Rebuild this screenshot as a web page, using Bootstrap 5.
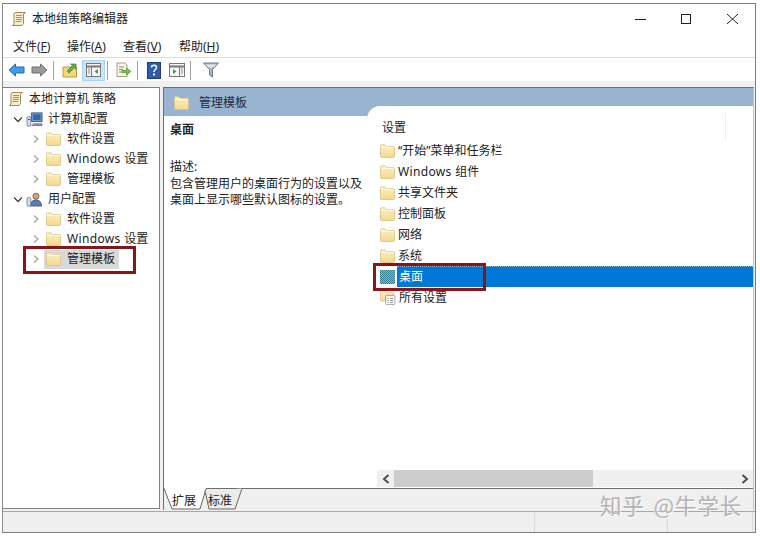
<!DOCTYPE html>
<html lang="zh-CN">
<head>
<meta charset="utf-8">
<title>本地组策略编辑器</title>
<link href="https://cdn.jsdelivr.net/npm/bootstrap@5.3.0/dist/css/bootstrap.min.css" rel="stylesheet">
<style>
html,body{height:537px;overflow:hidden;background:#fff}
body{font-family:"Noto Sans","Noto Sans CJK SC",sans-serif;font-size:12px;line-height:16px;color:#222;position:relative}
.wnd{position:relative;margin:3px 0 0 2px;width:754px;height:530px;border:1px solid #7d7d7d;border-left-color:#8a8a8a;background:#f0f0f0}
.titlebar{height:30px;background:#fff;padding:0 0 0 8px}
.titlebar .wt{margin-left:5px}
.capbtns{width:138px}
.menubar{height:23px;background:#fff;padding:2px 0 0 10px}
.menubar u{text-underline-offset:1px}
.m1{width:54px}.m2{width:56px}
.toolbar{height:24px;background:#fff;border-top:1px solid #dcdcdc;padding:1px 0 0 2px}
.tbtn{width:23px;height:21px;border:1px solid transparent}
.tbtn.on{background:#cce4f7;border-color:#a9d3f2;margin-left:1px}
.tsep{width:1px;height:19px;background:#a0a0a0;margin:0 4px 0 2px}
.mainrow{margin-top:6px;height:423px}
.treepane{width:157px;background:#fff;border:1px solid #828282;border-left:0;margin-right:3px;height:422px;padding-top:1px}
.trow{height:20px;white-space:nowrap}
.lv0{padding-left:5px}.lv1{padding-left:10px}.lv2{padding-left:28px}
.tchev{width:10px;flex:none}
.tico{margin-left:5px;margin-right:6px;flex:none}
.lv0 .tico{margin:0 5px 0 0}
.lv1 .tico{margin:0 5px 0 3px}
.tsel{background:#d9d9d9;margin-left:3px;padding:2px 4px 2px 0;height:19px}
.tsel .tico{margin-left:2px}
.wlat{letter-spacing:.35px}
.rpane{width:591px;border-top:1px solid #6e6e6e;border-left:1px solid #6e6e6e;border-right:1px solid #c4c4c4;margin-right:1px}
.panebody{background:#99b4d1;flex:1;min-height:0}
.desc{width:203px;flex:none}
.deschead{height:28px;padding:2px 0 0 10px;color:#1e2a38}
.deschead svg{margin-right:10px}
.descbody{background:#fff;padding:6px 0 0 6px;flex:1}
.descgap{height:21px}
.desclines{line-height:16.5px}
.listcol{flex:1;margin-top:18px;background:#fff;border-top-left-radius:13px}
.lhead{height:27px;margin-top:7px;width:359px;padding:2px 0 0 15px;border-right:1px solid #eee}
.lrow{height:21px;white-space:nowrap;padding-left:13px}
.lrow svg{flex:none;margin-right:3px}
.lsel-text{flex:1;background:#0078d7;color:#fff;border-top:1px dotted #7fb4e0;align-self:stretch;padding-left:2px;margin-left:-1px}
.hsb{height:17px;margin-left:10px;background:#f0f0f0;margin-top:auto;margin-bottom:1px}
.sbtn{width:17px;flex:none}
.thumb{width:199px;background:#cdcdcd}
.tabstrip{position:relative;height:22px;background:#f0f0f0;border-top:1px solid #6e6e6e;flex:none}
.tabart{position:absolute;left:-1px;top:-1px}
.tablab{position:relative;padding-top:4px}
.tablab.a{margin-left:8px}
.tablab.b{margin-left:12px}
.statusbar{height:21px;margin-top:1px;border-top:1px solid #a8a8a8}
.scell{border-right:1px solid #dadada}
.s1{width:532px}.s2{width:133px}.s3{width:85px}
.redbox{position:absolute;border:3px solid #8a1518;pointer-events:none}
.rb1{left:23px;top:246px;width:113px;height:28px}
.rb2{left:373px;top:263px;width:113px;height:28px}
.zhwm{position:absolute;left:600px;top:490px;font-size:21.5px;line-height:30px;color:#adadad;text-shadow:1px 1px 0 #fff,-1px 0 0 #e8e8e8;white-space:nowrap;letter-spacing:.9px;opacity:.9;font-family:"Noto Sans CJK SC",sans-serif}
.zhwm i{font-style:normal;margin-left:9px}
</style>
</head>
<body>
<svg width="0" height="0" class="position-absolute">
<defs>
<linearGradient id="fg" x1="0" y1="0" x2="0" y2="1"><stop offset="0" stop-color="#fbf0c8"/><stop offset="1" stop-color="#f5d88c"/></linearGradient>
<pattern id="dith" width="2" height="2" patternUnits="userSpaceOnUse"><rect width="2" height="2" fill="#8dbcbc"/><rect width="1" height="1" fill="#2f7f93"/><rect x="1" y="1" width="1" height="1" fill="#2f7f93"/></pattern>
<symbol id="folder" viewBox="0 0 15 14"><path d="M.5 2.500V1.800C.5 1.200 1 .8 1.500.8H5l1.500 1.700H13.500c.6 0 1 .4 1 1v9.200c0 .4-.4.8-.8.8H1.300c-.4 0-.8-.4-.8-.8z" fill="url(#fg)" stroke="#d8c285" stroke-width=".8"/><path d="M1 3.300H14" stroke="#fffbe6" stroke-width="1"/></symbol>
<symbol id="policy" viewBox="0 0 16 16"><path d="M4 1.500H14.500L12.500 3V12.500L11 14.500H1.500L3 13V3z" fill="#f6eecb" stroke="#9f8a56" stroke-width="1"/><path d="M5 4.500H11M5 6.500H11M5 8.500H11M4.500 10.500H10" stroke="#8f8a70" stroke-width=".9"/></symbol>
<symbol id="comp" viewBox="0 0 18 16"><rect x="6" y="1" width="11" height="9" fill="#7ea7d8" stroke="#2a4a78"/><rect x="7.500" y="2.500" width="8" height="6" fill="#2f66ae"/><path d="M8 12.500H17V14.500H6z" fill="#8f9eb3" stroke="#4d5f79" stroke-width=".7"/><rect x="1" y="5" width="4" height="10" rx="1" fill="#d7e0ea" stroke="#5a6e8c" stroke-width=".8"/><path d="M2 8H4" stroke="#2a4a78"/></symbol>
<symbol id="userico" viewBox="0 0 18 16"><circle cx="10.500" cy="4.500" r="3.200" fill="#d9a67f" stroke="#5f4630" stroke-width=".8"/><path d="M4.500 15c0-4.500 2.500-6.500 6-6.500s6 2 6 6.500z" fill="#5b7fae" stroke="#344c6e" stroke-width=".8"/><rect x="1" y="6" width="4" height="9" rx="1" fill="#d7e0ea" stroke="#5a6e8c" stroke-width=".8"/></symbol>
<symbol id="chevr" viewBox="0 0 10 10"><path d="M3 1.500L7 5 3 8.500" fill="none" stroke="#a6a6a6" stroke-width="1.300"/></symbol>
<symbol id="chevd" viewBox="0 0 10 10"><path d="M1 3.500L5 7.500 9 3.500" fill="none" stroke="#404040" stroke-width="1.300"/></symbol>
<symbol id="allset" viewBox="0 0 16 15"><path d="M.5 9V2c0-.5.4-1 1-1H5l1 1.300h7c.6 0 1 .4 1 1V5H6v6H1.500c-.6 0-1-.4-1-1z" fill="url(#fg)" stroke="#d8c285" stroke-width=".7"/><rect x="5.500" y="5.500" width="9.500" height="9" rx="1" fill="#f7f7f7" stroke="#9a9a9a" stroke-width=".8"/><path d="M7.500 8.500h1M10 8.500h3M7.500 10.500h1M10 10.500h3M7.500 12.500h1M10 12.500h3" stroke="#808080" stroke-width=".8"/></symbol>
</defs>
</svg>

<div class="wnd d-flex flex-column">
  <div class="titlebar d-flex align-items-center">
    <svg width="16" height="16"><use href="#policy"/></svg>
    <span class="wt flex-grow-1">本地组策略编辑器</span>
    <div class="capbtns d-flex align-items-center">
      <svg width="46" height="14" viewBox="0 0 46 14"><path d="M18 7.500H29" stroke="#222"/></svg>
      <svg width="46" height="14" viewBox="0 0 46 14"><rect x="18.500" y="2.500" width="9" height="9" fill="none" stroke="#222"/></svg>
      <svg width="46" height="14" viewBox="0 0 46 14"><path d="M18 2L29 12M29 2L18 12" stroke="#222"/></svg>
    </div>
  </div>
  <div class="menubar d-flex align-items-center">
    <span class="m1">文件(<u>F</u>)</span><span class="m2">操作(<u>A</u>)</span><span class="m2">查看(<u>V</u>)</span><span>帮助(<u>H</u>)</span>
  </div>
  <div class="toolbar d-flex align-items-center">
    <span class="tbtn d-flex align-items-center justify-content-center"><svg width="17" height="14" viewBox="0 0 17 14"><path d="M1 7L7.500 1V4H16V10H7.500V13z" fill="#3f9ee6" stroke="#1f6fb8"/></svg></span>
    <span class="tbtn d-flex align-items-center justify-content-center"><svg width="17" height="14" viewBox="0 0 17 14"><path d="M16 7L9.500 1V4H1V10H9.500V13z" fill="#9a9a9a" stroke="#6f6f6f"/></svg></span>
    <span class="tsep"></span>
    <span class="tbtn d-flex align-items-center justify-content-center"><svg width="16" height="16" viewBox="0 0 16 16"><path d="M1 5H14.500V15H1z" fill="#f3d67d" stroke="#b99b45"/><path d="M5 9L10.500 3.500 8.500 2H14V7.500L12.500 5.500 7 11z" fill="#5fb04a" stroke="#3b8330" stroke-width=".7"/></svg></span>
    <span class="tbtn on d-flex align-items-center justify-content-center"><svg width="15" height="14" viewBox="0 0 15 14"><rect x=".5" y=".5" width="14" height="13" fill="#f6f6f6" stroke="#777"/><path d="M.5 3.500H14.500" stroke="#777" stroke-width="2"/><path d="M5.500 4V13" stroke="#777"/><path d="M2 6H4M2 8H4M2 10H4" stroke="#888"/><path d="M12 6V11L8.500 8.500z" fill="#3d9a46"/></svg></span>
    <span class="tsep"></span>
    <span class="tbtn d-flex align-items-center justify-content-center"><svg width="17" height="16" viewBox="0 0 17 16"><path d="M2 1H10L12 3V14.500H2z" fill="#fbf7e4" stroke="#a89f7a"/><path d="M4 5H9M4 7.500H8M4 10H8" stroke="#888"/><path d="M7 8.500H11.500V6L16 9.500 11.500 13V10.500H7z" fill="#79c24e" stroke="#4b9130" stroke-width=".7"/></svg></span>
    <span class="tsep"></span>
    <span class="tbtn d-flex align-items-center justify-content-center"><svg width="14" height="17" viewBox="0 0 14 17"><rect x=".5" y=".5" width="13" height="16" fill="#2c5bb0" stroke="#1c3c7c"/><path d="M4.500 5.500C4.500 2.500 9.500 2.500 9.500 5.500 9.500 7.500 7 7.500 7 10" fill="none" stroke="#fff" stroke-width="1.500"/><rect x="6" y="11.500" width="2" height="2" fill="#fff"/></svg></span>
    <span class="tbtn d-flex align-items-center justify-content-center"><svg width="16" height="14" viewBox="0 0 16 14"><rect x=".5" y=".5" width="15" height="13" fill="#f6f6f6" stroke="#777"/><path d="M.5 3.500H15.500" stroke="#777" stroke-width="2"/><path d="M10.500 4V13" stroke="#777"/><path d="M12 6H14M12 8H14M12 10H14" stroke="#888"/><path d="M4 6V11L7.500 8.500z" fill="#3d9a46"/></svg></span>
    <span class="tsep"></span>
    <span class="tbtn d-flex align-items-center justify-content-center ms-1"><svg width="16" height="16" viewBox="0 0 16 16"><path d="M.5 1H15.500L9.500 7.500V15L6.500 13V7.500z" fill="#a9b6bf" stroke="#6f7f8a"/><path d="M2.500 2.500H13.500L10 5.500H5.500z" fill="#dfe6ea"/></svg></span>
  </div>
  <div class="mainrow d-flex">
    <div class="treepane">
      <div class="trow d-flex align-items-center lv0"><svg class="tico" width="16" height="16"><use href="#policy"/></svg>本地计算机 策略</div>
      <div class="trow d-flex align-items-center lv1"><svg class="tchev" height="10"><use href="#chevd"/></svg><svg class="tico" width="17" height="15"><use href="#comp"/></svg>计算机配置</div>
      <div class="trow d-flex align-items-center lv2"><svg class="tchev" height="10"><use href="#chevr"/></svg><svg class="tico" width="15" height="14"><use href="#folder"/></svg>软件设置</div>
      <div class="trow d-flex align-items-center lv2"><svg class="tchev" height="10"><use href="#chevr"/></svg><svg class="tico" width="15" height="14"><use href="#folder"/></svg><span><span class="wlat">Windows </span>设置</span></div>
      <div class="trow d-flex align-items-center lv2"><svg class="tchev" height="10"><use href="#chevr"/></svg><svg class="tico" width="15" height="14"><use href="#folder"/></svg>管理模板</div>
      <div class="trow d-flex align-items-center lv1"><svg class="tchev" height="10"><use href="#chevd"/></svg><svg class="tico" width="17" height="15"><use href="#userico"/></svg>用户配置</div>
      <div class="trow d-flex align-items-center lv2"><svg class="tchev" height="10"><use href="#chevr"/></svg><svg class="tico" width="15" height="14"><use href="#folder"/></svg>软件设置</div>
      <div class="trow d-flex align-items-center lv2"><svg class="tchev" height="10"><use href="#chevr"/></svg><svg class="tico" width="15" height="14"><use href="#folder"/></svg><span><span class="wlat">Windows </span>设置</span></div>
      <div class="trow d-flex align-items-center lv2"><svg class="tchev" height="10"><use href="#chevr"/></svg><span class="tsel d-flex align-items-center"><svg class="tico" width="15" height="14"><use href="#folder"/></svg>管理模板</span></div>
    </div>
    <div class="rpane d-flex flex-column">
      <div class="panebody d-flex">
        <div class="desc d-flex flex-column">
          <div class="deschead d-flex align-items-center"><svg width="15" height="14"><use href="#folder"/></svg><span>管理模板</span></div>
          <div class="descbody">
            <div class="fw-bold">桌面</div>
            <div class="descgap"></div>
            <div class="desclines">描述:<br>包含管理用户的桌面行为的设置以及<br>桌面上显示哪些默认图标的设置。</div>
          </div>
        </div>
        <div class="listcol d-flex flex-column">
          <div class="lhead d-flex align-items-center">设置</div>
          <div class="lrow d-flex align-items-center"><svg width="15" height="14"><use href="#folder"/></svg>“开始”菜单和任务栏</div>
          <div class="lrow d-flex align-items-center"><svg width="15" height="14"><use href="#folder"/></svg><span><span class="wlat">Windows </span>组件</span></div>
          <div class="lrow d-flex align-items-center"><svg width="15" height="14"><use href="#folder"/></svg>共享文件夹</div>
          <div class="lrow d-flex align-items-center"><svg width="15" height="14"><use href="#folder"/></svg>控制面板</div>
          <div class="lrow d-flex align-items-center"><svg width="15" height="14"><use href="#folder"/></svg>网络</div>
          <div class="lrow d-flex align-items-center"><svg width="15" height="14"><use href="#folder"/></svg>系统</div>
          <div class="lrow d-flex align-items-center"><svg width="15" height="14"><rect width="15" height="14" fill="url(#dith)"/></svg><span class="lsel-text d-flex align-items-center">桌面</span></div>
          <div class="lrow d-flex align-items-center"><svg width="16" height="15"><use href="#allset"/></svg>所有设置</div>
          <div class="hsb d-flex">
            <span class="sbtn d-flex align-items-center justify-content-center"><svg width="8" height="10" viewBox="0 0 8 10"><path d="M6.500 1L2 5 6.500 9" fill="none" stroke="#505050" stroke-width="2"/></svg></span>
            <span class="thumb"></span>
            <span class="flex-grow-1"></span>
            <span class="sbtn d-flex align-items-center justify-content-center"><svg width="8" height="10" viewBox="0 0 8 10"><path d="M1.500 1L6 5 1.500 9" fill="none" stroke="#505050" stroke-width="2"/></svg></span>
          </div>
        </div>
      </div>
      <div class="tabstrip d-flex">
        <svg class="tabart" width="90" height="23" viewBox="0 0 90 23"><path d="M1 0L9 21H37L43 0z" fill="#fff"/><path d="M1 .5L9 21H37L43 1" fill="none" stroke="#666"/><path d="M42 3L46 21H72L79 .5" fill="#ebebeb" stroke="#666"/></svg>
        <span class="tablab a">扩展</span><span class="tablab b">标准</span>
      </div>
    </div>
  </div>
  <div class="statusbar d-flex">
    <span class="scell s1"></span><span class="scell s2"></span><span class="scell s3"></span>
  </div>
</div>
<div class="redbox rb1"></div>
<div class="redbox rb2"></div>
<div class="zhwm">知乎<i>@牛学长</i></div>
</body>
</html>
